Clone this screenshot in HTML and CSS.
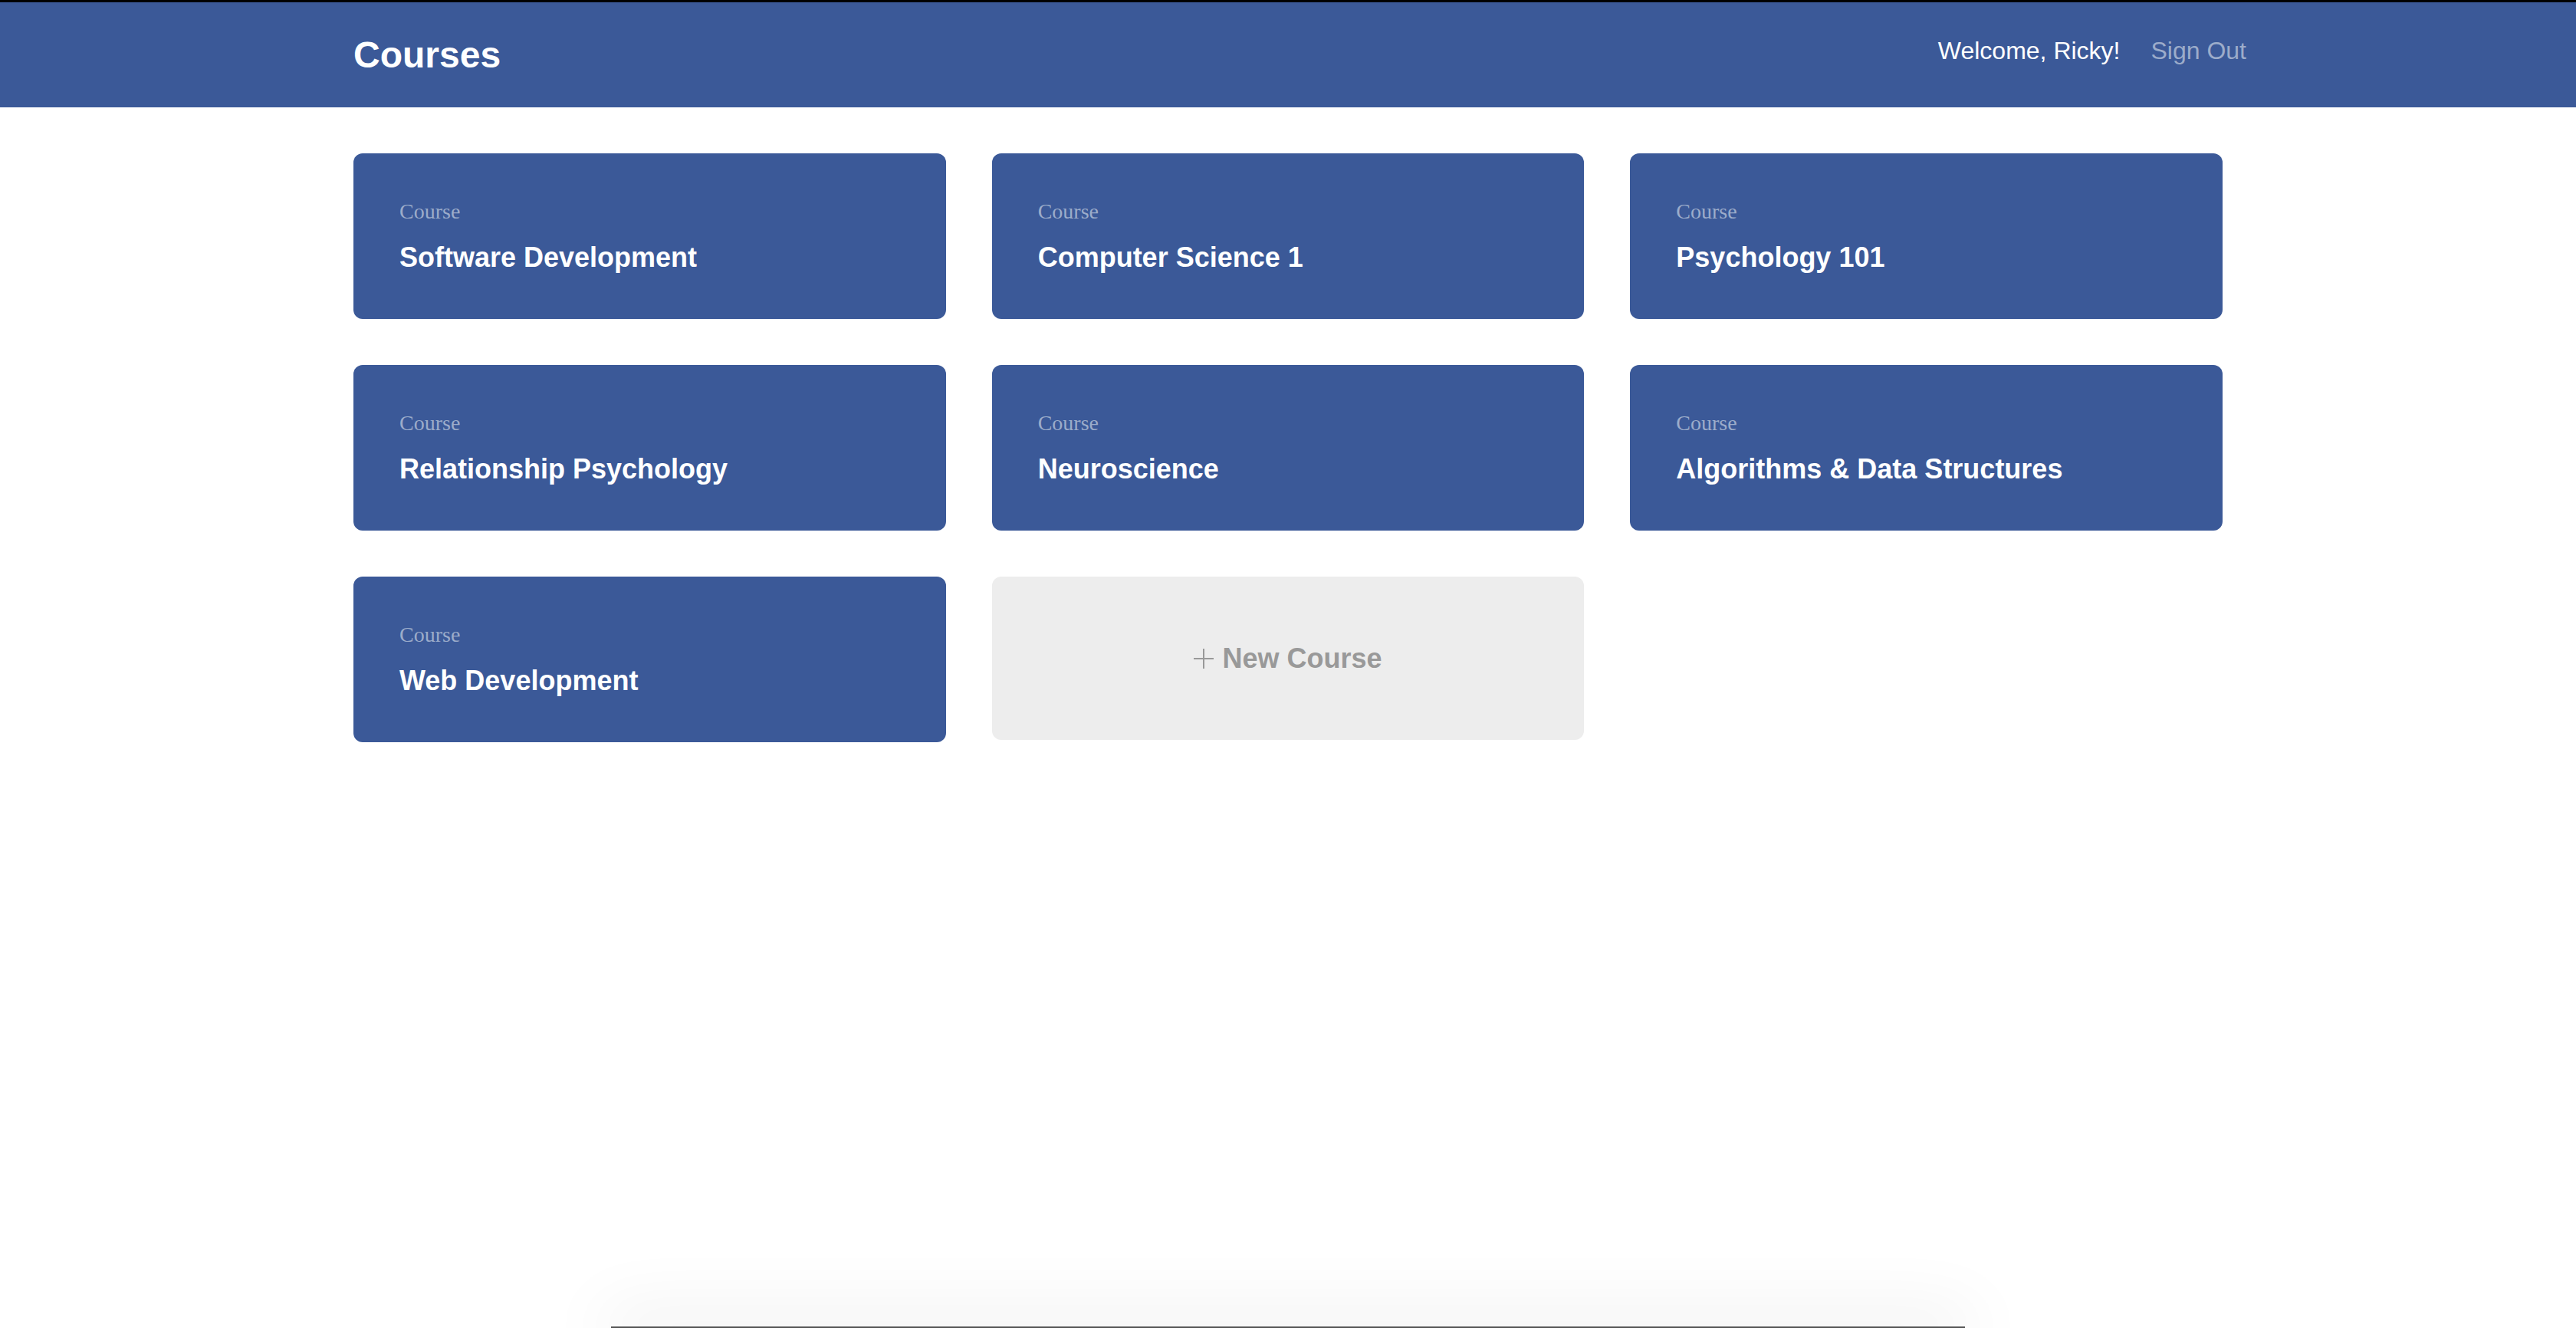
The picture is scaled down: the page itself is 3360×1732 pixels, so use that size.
FILE: index.html
```html
<!DOCTYPE html>
<html lang="en">
<head>
<meta charset="utf-8">
<title>Courses</title>
<link rel="stylesheet" href="styles.css">
</head>
<body>
  <header class="topbar">
    <div class="topbar-inner">
      <h1 class="brand">Courses</h1>
      <nav class="user-nav">
        <span class="welcome">Welcome, Ricky!</span>
        <a class="signout" href="#">Sign Out</a>
      </nav>
    </div>
  </header>

  <main class="content">
    <div class="course-grid">
      <a class="course-card" href="#"><span class="course-label">Course</span><span class="course-title">Software Development</span></a>
      <a class="course-card" href="#"><span class="course-label">Course</span><span class="course-title">Computer Science 1</span></a>
      <a class="course-card" href="#"><span class="course-label">Course</span><span class="course-title">Psychology 101</span></a>
      <a class="course-card" href="#"><span class="course-label">Course</span><span class="course-title">Relationship Psychology</span></a>
      <a class="course-card" href="#"><span class="course-label">Course</span><span class="course-title">Neuroscience</span></a>
      <a class="course-card" href="#"><span class="course-label">Course</span><span class="course-title">Algorithms &amp; Data Structures</span></a>
      <a class="course-card" href="#"><span class="course-label">Course</span><span class="course-title">Web Development</span></a>
      <a class="new-card" href="#">
        <svg class="plus" width="26" height="26" viewBox="0 0 26 26" aria-hidden="true">
          <line x1="13" y1="0" x2="13" y2="26" stroke="#999999" stroke-width="2"/>
          <line x1="0" y1="13" x2="26" y2="13" stroke="#999999" stroke-width="2"/>
        </svg>
        <span class="new-text">New Course</span>
      </a>
    </div>
  </main>

  <div class="dock"></div>
</body>
</html>
```

FILE: styles.css
```css
html, body {
  margin: 0;
  padding: 0;
  background: #ffffff;
  height: 100%;
  overflow: hidden;
}

body {
  font-family: "Liberation Sans", Arial, Helvetica, sans-serif;
}

.topbar {
  background: #3b5998;
  border-top: 3px solid #000000;
  height: 137px;
  display: flex;
  align-items: center;
}

.topbar-inner {
  width: 2438px;
  margin: 0 auto;
  display: flex;
  align-items: center;
  justify-content: space-between;
}

.brand {
  margin: 0;
  color: #ffffff;
  font-size: 48px;
  font-weight: bold;
  line-height: 55px;
}

.user-nav {
  display: flex;
  align-items: center;
  gap: 40px;
  margin-right: -31px;
  margin-bottom: 10px;
  font-size: 32px;
  line-height: 37px;
}

.welcome {
  color: #ffffff;
}

.signout {
  color: #9cacca;
  text-decoration: none;
}

.content {
  padding-top: 60px;
}

.course-grid {
  width: 2438px;
  margin: 0 auto;
  display: grid;
  grid-template-columns: repeat(3, 1fr);
  column-gap: 60px;
  row-gap: 60px;
  align-items: start;
}

.course-card {
  display: flex;
  flex-direction: column;
  box-sizing: border-box;
  height: 216px;
  padding: 60px 60px 0;
  background: #3b5998;
  border-radius: 12px;
  text-decoration: none;
}

.course-label {
  font-family: "Liberation Serif", "Times New Roman", serif;
  font-size: 28px;
  line-height: 32px;
  color: #9cacca;
}

.course-title {
  margin-top: 23px;
  font-size: 36px;
  line-height: 41px;
  font-weight: bold;
  color: #ffffff;
}

.new-card {
  display: flex;
  align-items: center;
  justify-content: center;
  gap: 11px;
  height: 213px;
  background: #ededed;
  border-radius: 12px;
  text-decoration: none;
}

.plus {
  display: block;
  margin-top: 1px;
}

.new-text {
  font-size: 36px;
  line-height: 41px;
  font-weight: bold;
  color: #999999;
}

.dock {
  position: fixed;
  left: 50%;
  transform: translateX(-50%);
  bottom: 0;
  width: 1766px;
  height: 0;
  border-top: 2px solid #555555;
  box-shadow: 0 0 90px 10px rgba(0, 0, 0, 0.14);
}
```
